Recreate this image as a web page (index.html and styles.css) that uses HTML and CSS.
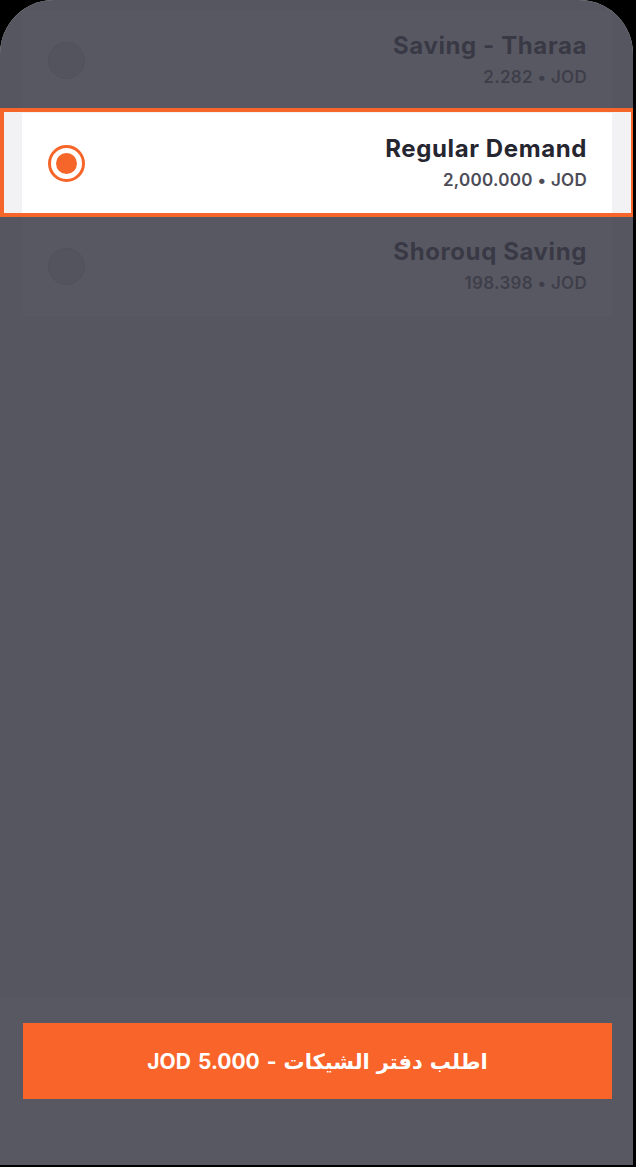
FILE: index.html
```html
<!DOCTYPE html>
<html lang="en">
<head>
<meta charset="utf-8">
<title>Accounts</title>
<link rel="stylesheet" href="styles.css">
</head>
<body>
<div class="screen">
  <div class="list">
    <div class="card">
      <span class="radio"></span>
      <div class="info">
        <div class="title">Saving - Tharaa</div>
        <div class="sub">2.282 • JOD</div>
      </div>
    </div>
    <div class="card selected">
      <span class="radio on"></span>
      <div class="info">
        <div class="title">Regular Demand</div>
        <div class="sub">2,000.000 • JOD</div>
      </div>
    </div>
    <div class="card">
      <span class="radio"></span>
      <div class="info">
        <div class="title">Shorouq Saving</div>
        <div class="sub">198.398 • JOD</div>
      </div>
    </div>
  </div>
  <div class="bottom">
    <button class="cta" dir="rtl">اطلب دفتر الشيكات - JOD 5.000</button>
  </div>
  <div class="dim"></div>
</div>
</body>
</html>
```
FILE: styles.css
```css
html, body {
  margin: 0;
  padding: 0;
  background: #000;
}
body {
  font-family: "Inter", "DejaVu Sans", sans-serif;
}
.screen {
  position: relative;
  width: 633px;
  height: 1165px;
  border-radius: 54px 54px 0 0;
  overflow: hidden;
  background: #f2f2f4;
  display: flex;
  flex-direction: column;
}
.list {
  flex: 1;
  padding: 10px 21px 0 22px;
  display: flex;
  flex-direction: column;
  gap: 3px;
}
.card {
  position: relative;
  height: 100px;
  background: #fff;
  display: flex;
  align-items: center;
  justify-content: space-between;
  padding: 0 25px 0 26px;
  box-sizing: border-box;
}
.card.selected {
  z-index: 2;
}
.card.selected::before {
  content: "";
  position: absolute;
  left: -22px;
  right: -23px;
  top: -5px;
  bottom: -4px;
  border: 4px solid #f6652a;
  background: #f2f2f4;
  z-index: -1;
}
.card.selected::after {
  content: "";
  position: absolute;
  inset: 0;
  background: #fff;
  z-index: -1;
}
.radio {
  width: 37px;
  height: 37px;
  box-sizing: border-box;
  border-radius: 50%;
  border: 1.5px solid #c6c6ce;
  background: #e2e2e6;
  display: flex;
  align-items: center;
  justify-content: center;
}
.radio.on {
  border: 3.5px solid #f6652a;
  background: #fff;
}
.radio.on::after {
  content: "";
  width: 21px;
  height: 21px;
  border-radius: 50%;
  background: #f6652a;
}
.info {
  text-align: right;
}
.title {
  font-size: 24px;
  font-weight: 700;
  color: #262631;
  line-height: 28px;
  letter-spacing: 0.6px;
}
.sub {
  font-size: 17px;
  font-weight: 600;
  color: #4c4c57;
  line-height: 22px;
  margin-top: 6px;
  letter-spacing: 0.3px;
}
.bottom {
  background: #fff;
  height: 168px;
  padding: 26px 21px 0 23px;
  box-sizing: border-box;
}
.cta {
  position: relative;
  z-index: 2;
  width: 100%;
  height: 76px;
  border: 0;
  background: #f9642a;
  color: #fff;
  font-family: "Inter", "DejaVu Sans", sans-serif;
  font-size: 21px;
  font-weight: 700;
  word-spacing: 2px;
  display: flex;
  align-items: center;
  justify-content: center;
  padding: 0;
}
.dim {
  position: absolute;
  inset: 0;
  background: rgba(60, 60, 72, 0.86);
  z-index: 1;
}
```
